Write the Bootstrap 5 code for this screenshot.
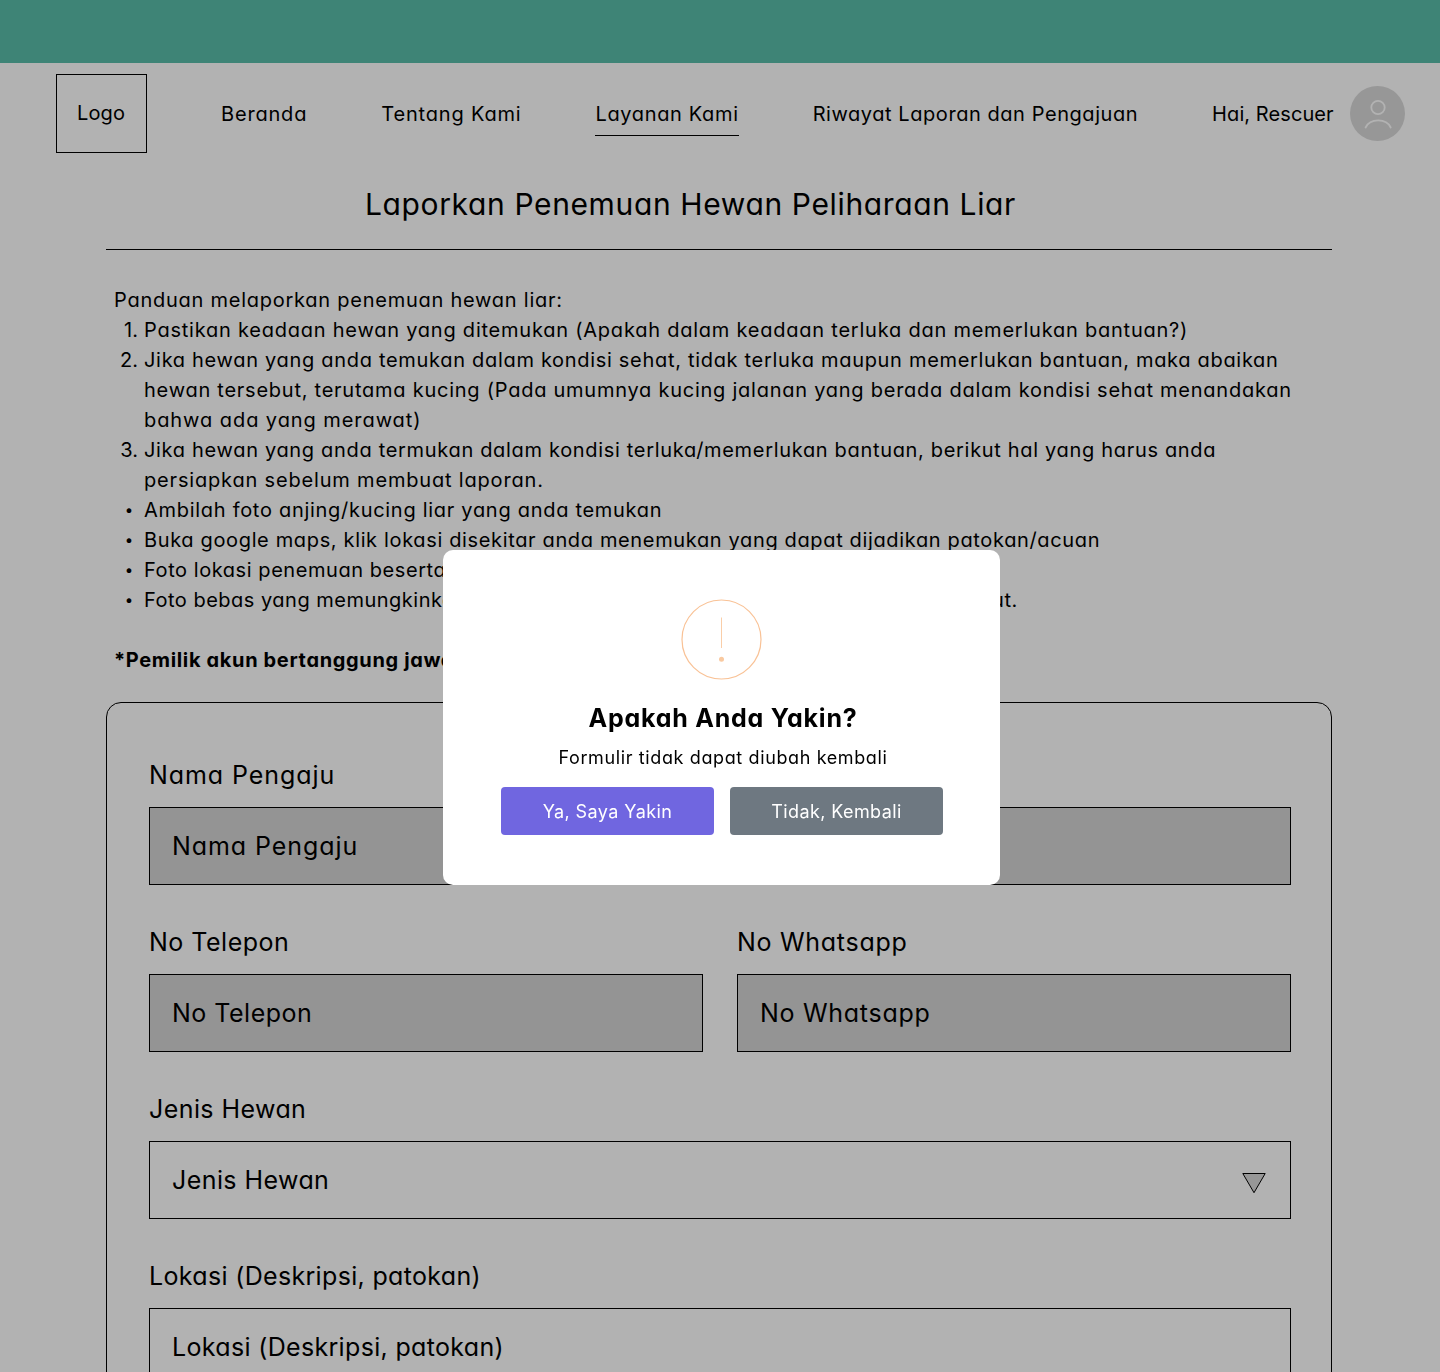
<!DOCTYPE html>
<html lang="id">
<head>
<meta charset="utf-8">
<meta name="viewport" content="width=device-width, initial-scale=1">
<title>Laporkan Penemuan Hewan Peliharaan Liar</title>
<link href="https://cdn.jsdelivr.net/npm/bootstrap@5.3.0/dist/css/bootstrap.min.css" rel="stylesheet">
<style>
  body { font-family: Inter, sans-serif; font-feature-settings: "cv11"; font-size: 20px; line-height: 30px; color: #000; background: #fff; letter-spacing: .71px; }
  .page { height: 1372px; }
  .topbar { height: 63px; background: #5abea9; }
  .site-nav { height: 102px; padding: 11px 35px 0 56px; }
  .logo-box { width: 91px; height: 79px; border: 1px solid #000; letter-spacing: .1px; padding: 0 1px 1px 0; }
  .menu { gap: 74px; margin-left: 74px; height: 79px; padding-top: 1px; }
  .menu a { color: #000; text-decoration: none; white-space: nowrap; padding: 6px 0; border-bottom: 1px solid transparent; }
  .menu a.current { border-bottom-color: #000; }
  .main-col { margin-left: 106px; width: 1226px; }
  .page-title { font-size: 30px; line-height: 45px; font-weight: 400; letter-spacing: .63px; padding: 17px 57px 22px 0; border-bottom: 1px solid #000; margin: 0; }
  .guide { padding: 35px 0 0 8px; white-space: nowrap; }
  .guide li { display: flex; }
  .guide .num { width: 30px; flex: none; padding-right: 6px; text-align: right; letter-spacing: 0; }
  .guide .dot { width: 30px; flex: none; text-align: center; letter-spacing: 0; font-size: 15px; }
  .guide p { margin: 30px 0 0; }
  .ls-08 { letter-spacing: .08px; } .ls-33 { letter-spacing: .33px; } .ls-42 { letter-spacing: .42px; } .ls-50 { letter-spacing: .495px; } .ls-56 { letter-spacing: .56px; }
  .ls-64 { letter-spacing: .645px; } .ls-67 { letter-spacing: .677px; } .ls-69 { letter-spacing: .69px; } .ls-75 { letter-spacing: .75px; }
  .ls-77 { letter-spacing: .77px; } .ls-80 { letter-spacing: .82px; } .ls-92 { letter-spacing: .93px; }
  .form-box { margin-top: 27px; border: 1px solid #000; border-radius: 15px; padding: 54px 40px 60px 42px; font-size: 25px; line-height: 37.5px; }
  .form-box .form-row { display: flex; gap: 34px; margin-bottom: 39px; }
  .form-box label { display: block; margin-bottom: 12.5px; }
  .field { height: 78px; border: 1px solid #000; padding: 1.5px 24px 0 22px; }
  .field svg { margin-top: 4px; }
  .field-off { background: #d5d5d5; }
  .modal-backdrop.veil { --bs-backdrop-opacity: .3; width: 100%; height: 100%; }
  .modal.confirm { padding-left: 3px; overflow: hidden; }
  .confirm .modal-dialog { width: 557px; max-width: 557px; margin: 550px auto 0; }
  .confirm .modal-content { height: 335px; border: 0; border-radius: 10px; padding: 49px 57px 48px 58px; color: #000; }
  .confirm .alert-mark { margin: 0 0 0 180px; }
  .confirm h2 { font-size: 25px; line-height: 37.5px; font-weight: 700; letter-spacing: .77px; margin: 20px 0 6.5px 2px; }
  .confirm p { font-size: 18px; line-height: 27px; letter-spacing: .62px; margin: 0 0 16px 2px; }
  .confirm .btn { font-size: 18px; line-height: 27px; width: 213px; height: 48px; border: 0; border-radius: 4px; color: #fff; padding: 0; }
  .confirm .btn-yes { background: #7066e0; letter-spacing: .42px; } .confirm .btn-no { background: #6e7881; letter-spacing: .4px; }
</style>
</head>
<body>
<div class="page overflow-hidden">
<div class="topbar"></div>
<header class="site-nav d-flex">
  <div class="logo-box d-flex align-items-center justify-content-center">Logo</div>
  <nav class="menu d-flex align-items-center">
    <a href="#" class="ls-80">Beranda</a>
    <a href="#" class="ls-80">Tentang Kami</a>
    <a href="#" class="ls-64 current">Layanan Kami</a>
    <a href="#" class="ls-56">Riwayat Laporan dan Pengajuan</a>
    <a href="#" class="ls-08">Hai, Rescuer</a>
  </nav>
  <svg class="ms-auto mt-1" width="55" height="71" viewBox="0 0 55 71" fill="none">
    <circle cx="27.5" cy="35.5" r="27.5" fill="#d9d9d9"/>
    <circle cx="28" cy="29.5" r="6.7" stroke="#fff" stroke-width="1.8"/>
    <path d="M15.6 49.5C18 44.5 22.5 42.4 28.2 42.4S38.4 44.5 40.700 49.5" stroke="#fff" stroke-width="1.8" stroke-linecap="round"/>
  </svg>
</header>
<main class="main-col">
  <h1 class="page-title text-center">Laporkan Penemuan Hewan Peliharaan Liar</h1>
  <section class="guide">
    <div class="ls-75">Panduan melaporkan penemuan hewan liar:</div>
    <ul class="list-unstyled m-0">
      <li class="ls-77"><span class="num">1.</span><span>Pastikan keadaan hewan yang ditemukan (Apakah dalam keadaan terluka dan memerlukan bantuan?)</span></li>
      <li class="ls-69"><span class="num">2.</span><span>Jika hewan yang anda temukan dalam kondisi sehat, tidak terluka maupun memerlukan bantuan, maka abaikan<br><span class="ls-75">hewan tersebut, terutama kucing (Pada umumnya kucing jalanan yang berada dalam kondisi sehat menandakan</span><br><span class="ls-92">bahwa ada yang merawat)</span></span></li>
      <li class="ls-67"><span class="num">3.</span><span>Jika hewan yang anda termukan dalam kondisi terluka/memerlukan bantuan, berikut hal yang harus anda<br><span class="ls-80">persiapkan sebelum membuat laporan.</span></span></li>
      <li><span class="dot">•</span><span>Ambilah foto anjing/kucing liar yang anda temukan</span></li>
      <li class="ls-64"><span class="dot">•</span><span>Buka google maps, klik lokasi disekitar anda menemukan yang dapat dijadikan patokan/acuan</span></li>
      <li class="ls-56"><span class="dot">•</span><span>Foto lokasi penemuan beserta hewan</span></li>
      <li class="ls-50"><span class="dot">•</span><span>Foto bebas yang memungkinkan dapat membantu rescuer menemukan hewan tersebut.</span></li>
    </ul>
    <p class="fw-bold ls-64">*Pemilik akun bertanggung jawab penuh atas laporan</p>
  </section>
  <form class="form-box">
    <div class="form-row">
      <div class="flex-fill ls-92"><label>Nama Pengaju</label><div class="field field-off d-flex align-items-center">Nama Pengaju</div></div>
    </div>
    <div class="form-row">
      <div class="flex-fill w-50 ls-50"><label>No Telepon</label><div class="field field-off d-flex align-items-center">No Telepon</div></div>
      <div class="flex-fill w-50"><label>No Whatsapp</label><div class="field field-off d-flex align-items-center">No Whatsapp</div></div>
    </div>
    <div class="form-row">
      <div class="flex-fill ls-42"><label>Jenis Hewan</label>
        <div class="field d-flex align-items-center justify-content-between">Jenis Hewan
          <svg width="24" height="22" viewBox="0 0 24 22"><path d="M.8 1.5H23.2L12 20.7Z" fill="#d9d9d9" stroke="#000"/></svg>
        </div></div>
    </div>
    <div class="form-row">
      <div class="flex-fill ls-33"><label>Lokasi (Deskripsi, patokan)</label><div class="field d-flex align-items-center">Lokasi (Deskripsi, patokan)</div></div>
    </div>
  </form>
</main>
</div>

<div class="modal-backdrop show veil"></div>
<div class="modal d-block confirm" tabindex="-1" role="dialog" aria-modal="true">
  <div class="modal-dialog">
    <div class="modal-content text-center">
      <svg class="alert-mark d-block flex-shrink-0" width="81" height="81" viewBox="0 0 81 81" fill="none">
        <circle cx="40.5" cy="40.5" r="39.5" stroke="#f9c296" stroke-width="1.2"/>
        <path d="M40.5 18.5V49" stroke="#facea8"/>
        <circle cx="40.5" cy="60.2" r="2.5" fill="#f9c9a0"/>
      </svg>
      <h2>Apakah Anda Yakin?</h2>
      <p>Formulir tidak dapat diubah kembali</p>
      <div class="d-flex gap-3">
        <button type="button" class="btn btn-yes">Ya, Saya Yakin</button>
        <button type="button" class="btn btn-no">Tidak, Kembali</button>
      </div>
    </div>
  </div>
</div>
<script src="https://cdn.jsdelivr.net/npm/bootstrap@5.3.0/dist/js/bootstrap.bundle.min.js"></script>
</body>
</html>
